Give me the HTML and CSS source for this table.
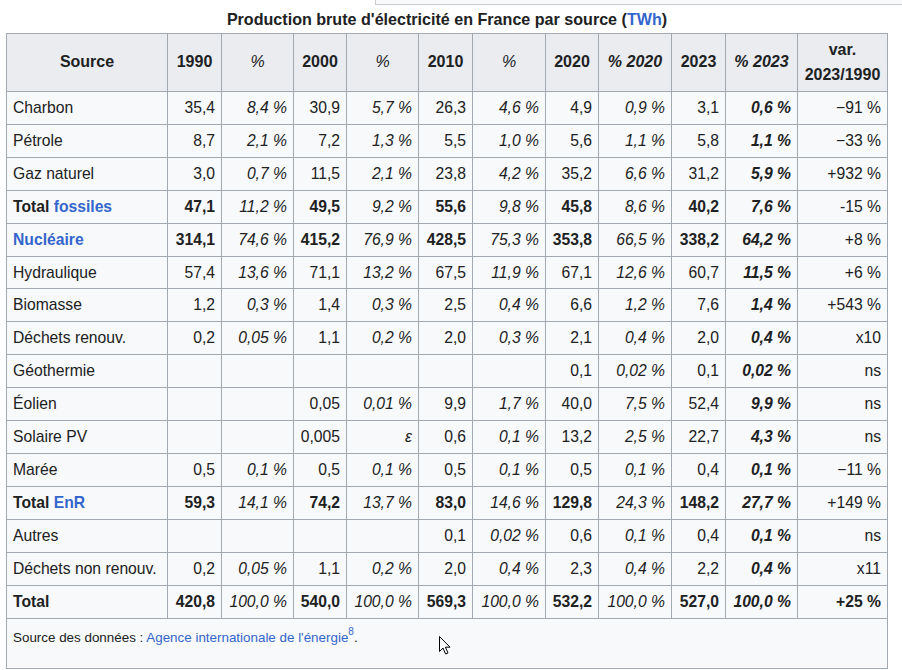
FILE: index.html
```html
<!DOCTYPE html>
<html lang="fr">
<head>
<meta charset="utf-8">
<title>Production brute d'électricité en France par source</title>
<link rel="stylesheet" href="styles.css">
</head>
<body>
<div class="topbox"></div>
<div class="page">
<table class="wikitable">
<caption>Production brute d'électricité en France par source (<a href="#">TWh</a>)</caption>
<colgroup>
<col class="c-src"><col class="c-y"><col class="c-p"><col class="c-y2"><col class="c-p"><col class="c-y"><col class="c-p3"><col class="c-y2"><col class="c-p3"><col class="c-y"><col class="c-p"><col class="c-var">
</colgroup>
<thead>
<tr>
<th>Source</th><th>1990</th><th class="hp">%</th><th>2000</th><th class="hp">%</th><th>2010</th><th class="hp">%</th><th>2020</th><th class="hpb">% 2020</th><th>2023</th><th class="hpb">% 2023</th><th>var.<br>2023/1990</th>
</tr>
</thead>
<tbody>
<tr><td>Charbon</td><td>35,4</td><td class="i">8,4&nbsp;%</td><td>30,9</td><td class="i">5,7&nbsp;%</td><td>26,3</td><td class="i">4,6&nbsp;%</td><td>4,9</td><td class="i">0,9&nbsp;%</td><td>3,1</td><td class="bi">0,6&nbsp;%</td><td>−91&nbsp;%</td></tr>
<tr><td>Pétrole</td><td>8,7</td><td class="i">2,1&nbsp;%</td><td>7,2</td><td class="i">1,3&nbsp;%</td><td>5,5</td><td class="i">1,0&nbsp;%</td><td>5,6</td><td class="i">1,1&nbsp;%</td><td>5,8</td><td class="bi">1,1&nbsp;%</td><td>−33&nbsp;%</td></tr>
<tr><td>Gaz naturel</td><td>3,0</td><td class="i">0,7&nbsp;%</td><td>11,5</td><td class="i">2,1&nbsp;%</td><td>23,8</td><td class="i">4,2&nbsp;%</td><td>35,2</td><td class="i">6,6&nbsp;%</td><td>31,2</td><td class="bi">5,9&nbsp;%</td><td>+932&nbsp;%</td></tr>
<tr><td class="b">Total <a href="#">fossiles</a></td><td class="b">47,1</td><td class="i">11,2&nbsp;%</td><td class="b">49,5</td><td class="i">9,2&nbsp;%</td><td class="b">55,6</td><td class="i">9,8&nbsp;%</td><td class="b">45,8</td><td class="i">8,6&nbsp;%</td><td class="b">40,2</td><td class="bi">7,6&nbsp;%</td><td>-15&nbsp;%</td></tr>
<tr><td class="b"><a href="#">Nucléaire</a></td><td class="b">314,1</td><td class="i">74,6&nbsp;%</td><td class="b">415,2</td><td class="i">76,9&nbsp;%</td><td class="b">428,5</td><td class="i">75,3&nbsp;%</td><td class="b">353,8</td><td class="i">66,5&nbsp;%</td><td class="b">338,2</td><td class="bi">64,2&nbsp;%</td><td>+8&nbsp;%</td></tr>
<tr><td>Hydraulique</td><td>57,4</td><td class="i">13,6&nbsp;%</td><td>71,1</td><td class="i">13,2&nbsp;%</td><td>67,5</td><td class="i">11,9&nbsp;%</td><td>67,1</td><td class="i">12,6&nbsp;%</td><td>60,7</td><td class="bi">11,5&nbsp;%</td><td>+6&nbsp;%</td></tr>
<tr><td>Biomasse</td><td>1,2</td><td class="i">0,3&nbsp;%</td><td>1,4</td><td class="i">0,3&nbsp;%</td><td>2,5</td><td class="i">0,4&nbsp;%</td><td>6,6</td><td class="i">1,2&nbsp;%</td><td>7,6</td><td class="bi">1,4&nbsp;%</td><td>+543&nbsp;%</td></tr>
<tr><td>Déchets renouv.</td><td>0,2</td><td class="i">0,05&nbsp;%</td><td>1,1</td><td class="i">0,2&nbsp;%</td><td>2,0</td><td class="i">0,3&nbsp;%</td><td>2,1</td><td class="i">0,4&nbsp;%</td><td>2,0</td><td class="bi">0,4&nbsp;%</td><td>x10</td></tr>
<tr><td>Géothermie</td><td></td><td></td><td></td><td></td><td></td><td></td><td>0,1</td><td class="i">0,02&nbsp;%</td><td>0,1</td><td class="bi">0,02&nbsp;%</td><td>ns</td></tr>
<tr><td>Éolien</td><td></td><td></td><td>0,05</td><td class="i">0,01&nbsp;%</td><td>9,9</td><td class="i">1,7&nbsp;%</td><td>40,0</td><td class="i">7,5&nbsp;%</td><td>52,4</td><td class="bi">9,9&nbsp;%</td><td>ns</td></tr>
<tr><td>Solaire PV</td><td></td><td></td><td>0,005</td><td class="i">ε</td><td>0,6</td><td class="i">0,1&nbsp;%</td><td>13,2</td><td class="i">2,5&nbsp;%</td><td>22,7</td><td class="bi">4,3&nbsp;%</td><td>ns</td></tr>
<tr><td>Marée</td><td>0,5</td><td class="i">0,1&nbsp;%</td><td>0,5</td><td class="i">0,1&nbsp;%</td><td>0,5</td><td class="i">0,1&nbsp;%</td><td>0,5</td><td class="i">0,1&nbsp;%</td><td>0,4</td><td class="bi">0,1&nbsp;%</td><td>−11&nbsp;%</td></tr>
<tr><td class="b">Total <a href="#">EnR</a></td><td class="b">59,3</td><td class="i">14,1&nbsp;%</td><td class="b">74,2</td><td class="i">13,7&nbsp;%</td><td class="b">83,0</td><td class="i">14,6&nbsp;%</td><td class="b">129,8</td><td class="i">24,3&nbsp;%</td><td class="b">148,2</td><td class="bi">27,7&nbsp;%</td><td>+149&nbsp;%</td></tr>
<tr><td>Autres</td><td></td><td></td><td></td><td></td><td>0,1</td><td class="i">0,02&nbsp;%</td><td>0,6</td><td class="i">0,1&nbsp;%</td><td>0,4</td><td class="bi">0,1&nbsp;%</td><td>ns</td></tr>
<tr><td>Déchets non renouv.</td><td>0,2</td><td class="i">0,05&nbsp;%</td><td>1,1</td><td class="i">0,2&nbsp;%</td><td>2,0</td><td class="i">0,4&nbsp;%</td><td>2,3</td><td class="i">0,4&nbsp;%</td><td>2,2</td><td class="bi">0,4&nbsp;%</td><td>x11</td></tr>
<tr><td class="b">Total</td><td class="b">420,8</td><td class="i">100,0&nbsp;%</td><td class="b">540,0</td><td class="i">100,0&nbsp;%</td><td class="b">569,3</td><td class="i">100,0&nbsp;%</td><td class="b">532,2</td><td class="i">100,0&nbsp;%</td><td class="b">527,0</td><td class="bi">100,0&nbsp;%</td><td class="b">+25&nbsp;%</td></tr>
</tbody>
<tfoot>
<tr><td colspan="12" class="foot">Source des données : <a href="#">Agence internationale de l'énergie</a><sup><a href="#">8</a></sup>.</td></tr>
</tfoot>
</table>
<svg class="cursor" width="13" height="21" viewBox="0 0 13 21" aria-hidden="true"><path d="M1.5 1.5 L1.5 16.5 L5 13 L7.6 19 L10 18 L7.4 12.2 L12 12.2 Z" fill="#fff" stroke="#000" stroke-width="1" stroke-linejoin="miter"/></svg>
</div>
</body>
</html>
```
FILE: styles.css
```css
html, body {
  margin: 0;
  padding: 0;
  background: #ffffff;
}
body {
  font-family: "Liberation Sans", Arial, sans-serif;
  font-size: 15.7px;
  color: #202122;
}
a {
  color: #3366cc;
  text-decoration: none;
}
.topbox {
  margin-left: 375px;
  height: 4px;
  background: #f8f9fa;
  border-left: 1px solid #c8ccd1;
  border-bottom: 1px solid #c8ccd1;
}
.page {
  position: relative;
  padding-left: 6px;
}
.wikitable {
  border-collapse: collapse;
  table-layout: fixed;
  width: 882px;
  background: #f8f9fa;
  border: 1px solid #a2a9b1;
  color: #202122;
}
.wikitable caption {
  font-weight: bold;
  font-size: 16.1px;
  line-height: 24px;
  padding: 2px 0 2px;
  text-align: center;
}
.c-src { width: 161px; }
.c-y { width: 54px; }
.c-y2 { width: 53px; }
.c-p { width: 72px; }
.c-p3 { width: 73px; }
.c-var { width: 90px; }
.wikitable th,
.wikitable td {
  border: 1px solid #a2a9b1;
  padding: 4px 6px;
  line-height: 23.9px;
  white-space: nowrap;
}
.wikitable th {
  background: #eaecf0;
  font-weight: bold;
  text-align: center;
  line-height: 24.5px;
  font-size: 16px;
}
.wikitable th.hp {
  font-style: italic;
  font-weight: normal;
}
.wikitable th.hpb {
  font-style: italic;
}
.wikitable td {
  text-align: right;
}
.wikitable td:first-child {
  text-align: left;
}
.wikitable td.b { font-weight: bold; }
.wikitable td.i { font-style: italic; }
.wikitable td.bi { font-style: italic; font-weight: bold; }
.wikitable td.foot {
  text-align: left;
  font-size: 13.4px;
  line-height: 20px;
  padding: 8px 6px 20px;
  vertical-align: top;
}
.foot sup {
  font-size: 10px;
  line-height: 1;
  vertical-align: 7px;
}
.cursor {
  position: absolute;
  left: 438px;
  top: 630px;
}
```
